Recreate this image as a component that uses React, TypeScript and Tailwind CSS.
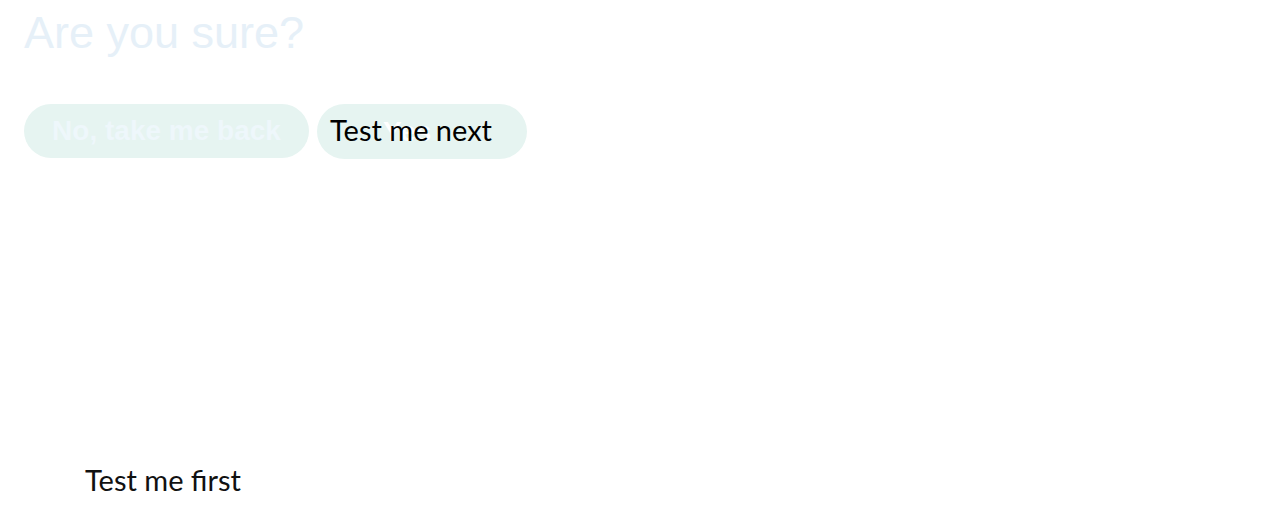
export default function App() {
  return (
    <div className="relative h-[523px] w-full bg-white">
      <div className="px-6 pt-[7px]">
        <h1 className="text-[45px] leading-[52px] text-[#e6f0f8] [font-family:'Liberation_Sans',Arial,sans-serif]">Are you sure?</h1>
        <div className="mt-[45px] flex gap-[8px]">
          <div className="flex h-[54px] w-[285px] items-center justify-center rounded-full bg-[#e6f4f1] text-[28px] font-bold text-[#eef7fb] [font-family:'Liberation_Sans',Arial,sans-serif]">No, take me back</div>
          <div className="relative flex h-[55px] w-[210px] items-center rounded-full bg-[#e6f4f1]">
            <span className="ml-[66px] text-[28px] font-bold text-white [font-family:'Liberation_Sans',Arial,sans-serif]">Yes</span>
            <span className="absolute left-[13px] top-[9px] text-[29px] leading-[1.2] text-black [font-family:Lato,sans-serif]">Test me next</span>
          </div>
        </div>
      </div>
      <div className="absolute left-[85px] top-[463px] text-[29px] leading-[1.2] text-[#111] [font-family:Lato,sans-serif]">Test me first</div>
    </div>
  );
}
